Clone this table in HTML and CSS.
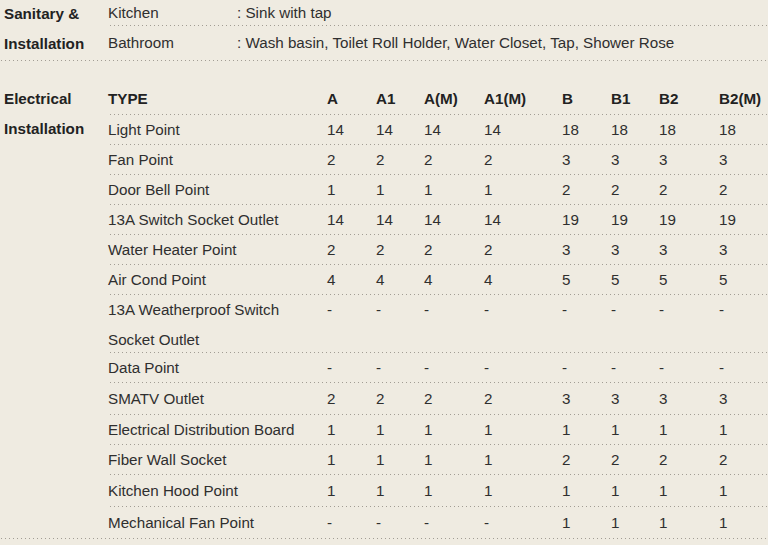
FILE: index.html
```html
<!DOCTYPE html>
<html lang="en">
<head>
<meta charset="utf-8">
<title>Specifications</title>
<link rel="stylesheet" href="styles.css">
</head>
<body>
<section class="section section-sanitary">
  <div class="heading">Sanitary &amp;<br>Installation</div>
  <div class="table">
    <div class="srow srow-first"><span>Kitchen</span><span>: Sink with tap</span></div>
    <div class="srow srow-last"><span>Bathroom</span><span>: Wash basin, Toilet Roll Holder, Water Closet, Tap, Shower Rose</span></div>
  </div>
</section>

<section class="section section-electrical">
  <div class="heading">Electrical<br>Installation</div>
  <div class="table">
    <div class="erow erow-head"><span>TYPE</span><span>A</span><span>A1</span><span>A(M)</span><span>A1(M)</span><span>B</span><span>B1</span><span>B2</span><span>B2(M)</span></div>
    <div class="erow"><span>Light Point</span><span>14</span><span>14</span><span>14</span><span>14</span><span>18</span><span>18</span><span>18</span><span>18</span></div>
    <div class="erow"><span>Fan Point</span><span>2</span><span>2</span><span>2</span><span>2</span><span>3</span><span>3</span><span>3</span><span>3</span></div>
    <div class="erow"><span>Door Bell Point</span><span>1</span><span>1</span><span>1</span><span>1</span><span>2</span><span>2</span><span>2</span><span>2</span></div>
    <div class="erow"><span>13A Switch Socket Outlet</span><span>14</span><span>14</span><span>14</span><span>14</span><span>19</span><span>19</span><span>19</span><span>19</span></div>
    <div class="erow"><span>Water Heater Point</span><span>2</span><span>2</span><span>2</span><span>2</span><span>3</span><span>3</span><span>3</span><span>3</span></div>
    <div class="erow"><span>Air Cond Point</span><span>4</span><span>4</span><span>4</span><span>4</span><span>5</span><span>5</span><span>5</span><span>5</span></div>
    <div class="erow erow-double"><span>13A Weatherproof Switch<br>Socket Outlet</span><span>-</span><span>-</span><span>-</span><span>-</span><span>-</span><span>-</span><span>-</span><span>-</span></div>
    <div class="erow"><span>Data Point</span><span>-</span><span>-</span><span>-</span><span>-</span><span>-</span><span>-</span><span>-</span><span>-</span></div>
    <div class="erow erow-tall"><span>SMATV Outlet</span><span>2</span><span>2</span><span>2</span><span>2</span><span>3</span><span>3</span><span>3</span><span>3</span></div>
    <div class="erow"><span>Electrical Distribution Board</span><span>1</span><span>1</span><span>1</span><span>1</span><span>1</span><span>1</span><span>1</span><span>1</span></div>
    <div class="erow"><span>Fiber Wall Socket</span><span>1</span><span>1</span><span>1</span><span>1</span><span>2</span><span>2</span><span>2</span><span>2</span></div>
    <div class="erow erow-tall"><span>Kitchen Hood Point</span><span>1</span><span>1</span><span>1</span><span>1</span><span>1</span><span>1</span><span>1</span><span>1</span></div>
    <div class="erow erow-tall erow-last"><span>Mechanical Fan Point</span><span>-</span><span>-</span><span>-</span><span>-</span><span>1</span><span>1</span><span>1</span><span>1</span></div>
  </div>
</section>
</body>
</html>
```

FILE: styles.css
```css
html, body {
  margin: 0;
  padding: 0;
  background: #efebe1;
}

body {
  width: 768px;
  height: 545px;
  overflow: hidden;
  color: #2f2f2f;
  font-family: "Liberation Sans", Arial, sans-serif;
  font-size: 15.2px;
}

.section {
  display: grid;
  grid-template-columns: 108px 1fr;
  background-image: linear-gradient(to right, #a29d94 1px, transparent 1px);
  background-size: 4px 1px;
  background-repeat: repeat-x;
  background-position: 1px bottom;
}

.section-sanitary {
  margin-top: -1px;
  padding-top: 1px;
}

.section-electrical {
  margin-top: 23px;
}

.heading {
  font-weight: bold;
  color: #222;
  line-height: 30px;
  padding-left: 4px;
}

.section-sanitary .heading {
  margin-top: -1px;
}

.srow,
.erow {
  background-image: linear-gradient(to right, #a29d94 1px, transparent 1px);
  background-size: 4px 1px;
  background-repeat: repeat-x;
  background-position: 2px bottom;
}

.srow {
  display: grid;
  grid-template-columns: 129px 1fr;
}

.srow-first {
  height: 26px;
  line-height: 26px;
}

.srow-last {
  height: 35px;
  line-height: 30px;
  padding-top: 2px;
  box-sizing: border-box;
  background-image: none;
}

.erow {
  display: grid;
  grid-template-columns: 219px 49px 48px 60px 78px 49px 48px 60px 1fr;
  height: 30px;
  line-height: 30px;
  box-sizing: border-box;
}

.erow-head {
  height: 31px;
  font-weight: bold;
  color: #222;
}

.erow-double {
  height: 58px;
}

.erow-tall {
  height: 32px;
  line-height: 32px;
}

.erow-last {
  background-image: none;
}
```
